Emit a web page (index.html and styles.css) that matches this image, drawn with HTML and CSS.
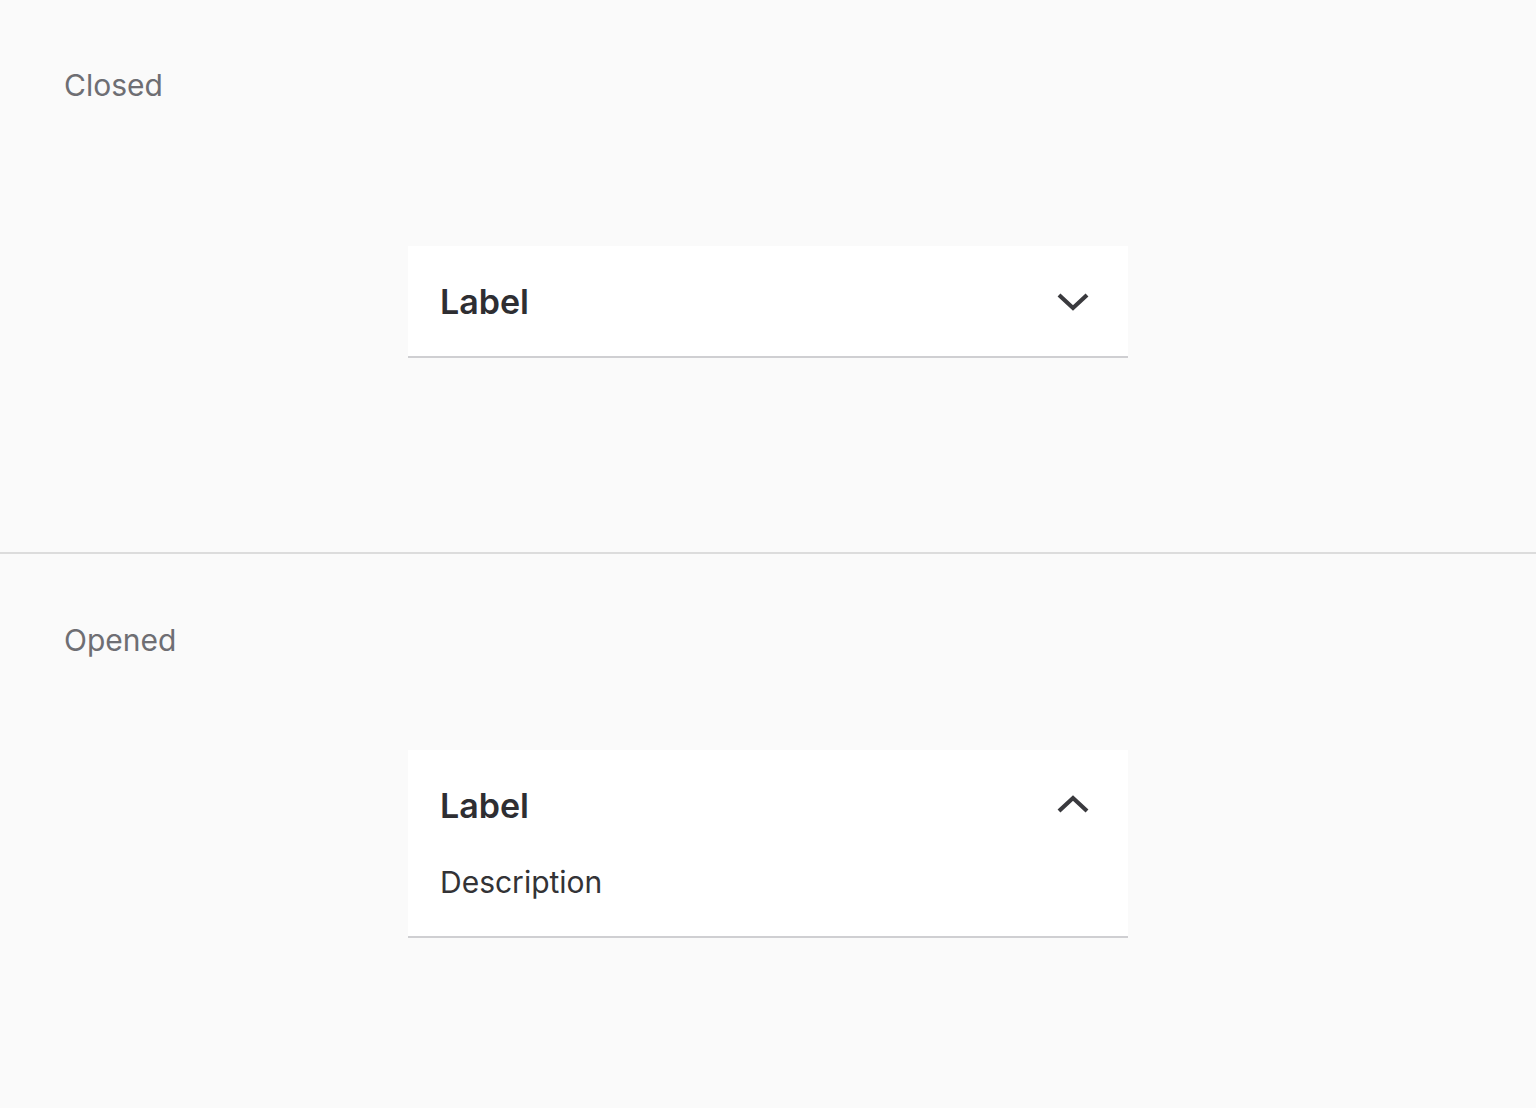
FILE: index.html
```html
<!DOCTYPE html>
<html lang="en">
<head>
  <meta charset="UTF-8">
  <title>Accordion</title>
  <link rel="stylesheet" href="styles.css">
</head>
<body>

  <section class="state">
    <div class="state-title">Closed</div>
    <div class="accordion">
      <div class="accordion-header">
        <span class="accordion-label">Label</span>
        <svg class="chevron" width="34" height="22" viewBox="0 0 34 22">
          <polyline points="3,5 17,18 31,5" fill="none" stroke="#3a3a3e" stroke-width="4.2" stroke-linecap="butt" stroke-linejoin="miter"/>
        </svg>
      </div>
    </div>
  </section>

  <section class="state state-open">
    <div class="state-title">Opened</div>
    <div class="accordion">
      <div class="accordion-header">
        <span class="accordion-label">Label</span>
        <svg class="chevron" width="34" height="22" viewBox="0 0 34 22">
          <polyline points="3,17 17,4 31,17" fill="none" stroke="#3a3a3e" stroke-width="4.2" stroke-linecap="butt" stroke-linejoin="miter"/>
        </svg>
      </div>
      <div class="accordion-body">Description</div>
    </div>
  </section>

</body>
</html>
```

FILE: styles.css
```css
body {
  margin: 0;
  font-family: Inter, 'Noto Sans', sans-serif;
  background-color: #fafafa;
}

.state {
  height: 554px;
  box-sizing: border-box;
  padding: 64px;
  border-bottom: 2px solid #dcdcdc;
}

.state-open {
  padding-top: 65px;
  border-bottom: none;
}

.state-title {
  font-size: 30px;
  line-height: 42px;
  color: #6e6e73;
  margin-bottom: 140px;
}

.state-open .state-title {
  margin-bottom: 89px;
}

.accordion {
  width: 720px;
  margin: 0 auto;
  background-color: #fff;
  border-bottom: 2px solid #cfcfd2;
}

.accordion-header {
  height: 110px;
  display: flex;
  align-items: center;
  justify-content: space-between;
  padding: 0 38px 0 32px;
}

.accordion-label {
  font-size: 34px;
  font-weight: 600;
  color: #2e2e32;
}

.chevron {
  display: block;
}

.accordion-body {
  padding: 0 32px 32px;
  font-size: 30px;
  line-height: 44px;
  color: #333336;
}
```
